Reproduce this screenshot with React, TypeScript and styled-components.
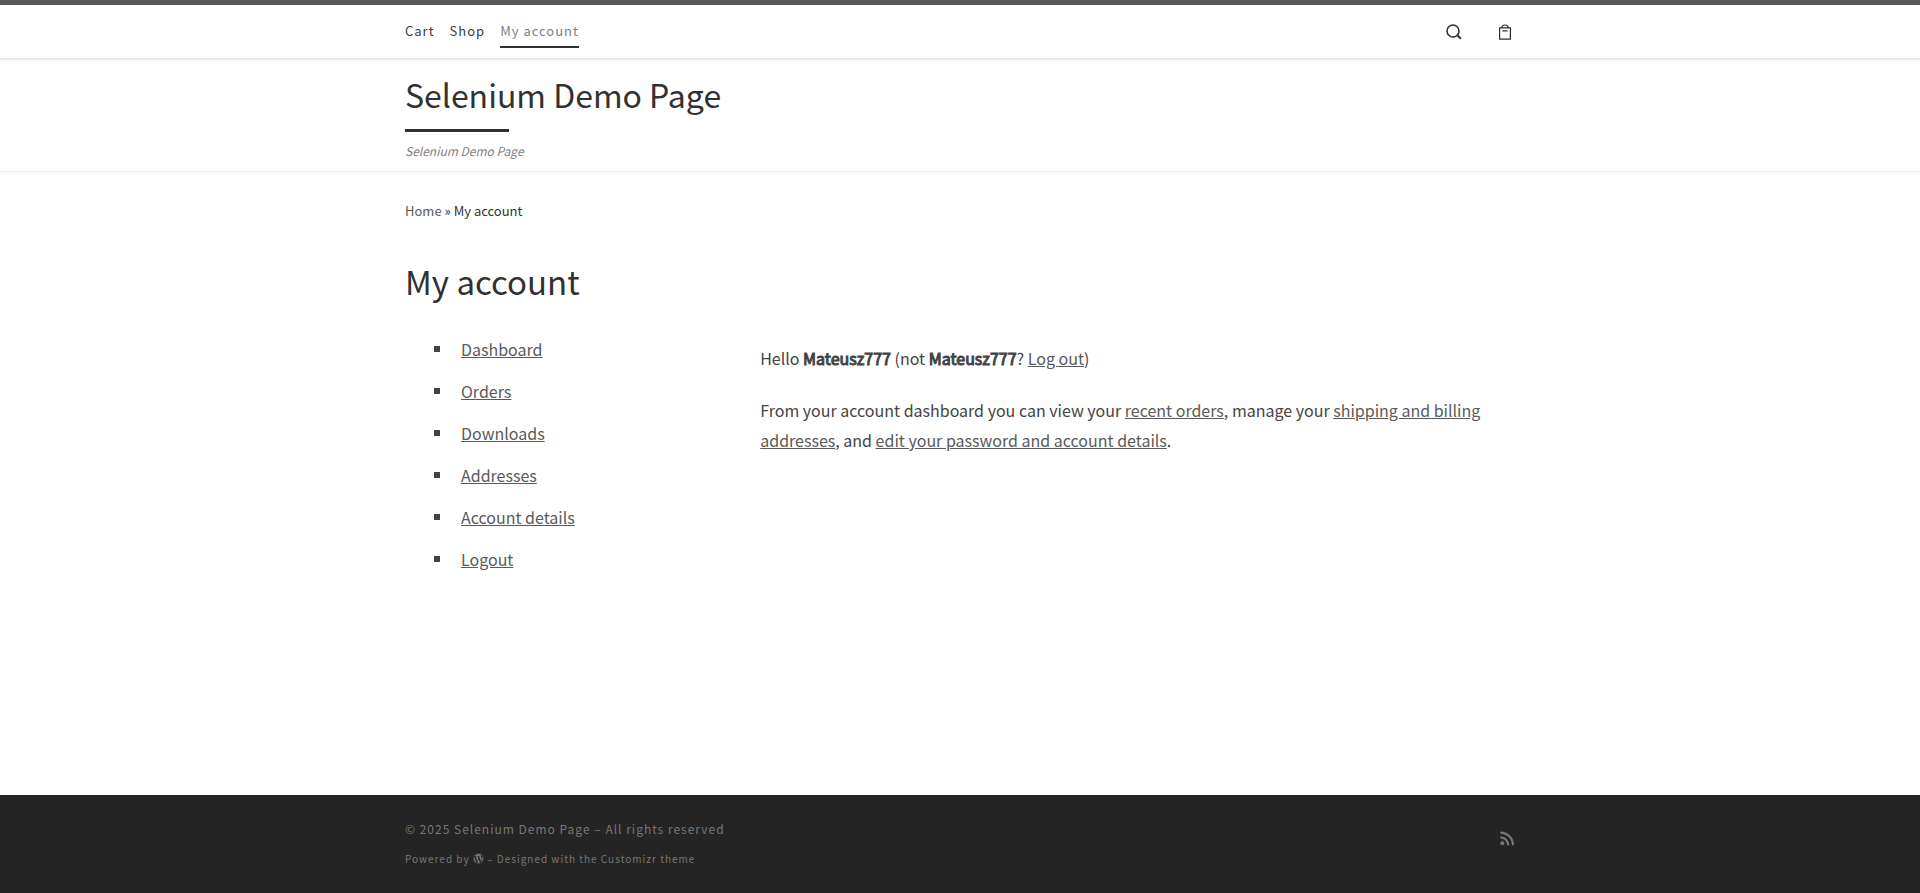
import React from "react";
import styled, { createGlobalStyle } from "styled-components";
import { FaWordpress } from "react-icons/fa";

const GlobalStyle = createGlobalStyle`
  *, *::before, *::after { box-sizing: border-box; }
  body {
    margin: 0;
    background: #fff;
    color: #444;
    font-family: "Source Sans Pro", "Noto Sans CJK SC", "Noto Sans", sans-serif;
    font-size: 16px;
    line-height: 30px;
  }
  a { color: inherit; text-decoration: none; }
`;

const Page = styled.div`
  min-height: 100vh;
  display: flex;
  flex-direction: column;
  border-top: 5px solid #5a5a5a;
`;

const Container = styled.div`
  width: 100%;
  max-width: 1140px;
  margin: 0 auto;
  padding: 0 15px;
`;

const TopBar = styled.header`
  border-bottom: 1px solid #e9e9e9;
  box-shadow: 0 1px 3px rgba(0, 0, 0, 0.1);
`;

const TopBarRow = styled(Container)`
  height: 53px;
  display: flex;
  align-items: center;
  justify-content: space-between;
`;

const Menu = styled.nav`
  display: flex;
  gap: 15px;
`;

const MenuLink = styled.a<{ $current?: boolean }>`
  padding: 6px 0 5px;
  border-bottom: 2px solid ${(p) => (p.$current ? "#313131" : "transparent")};
  color: ${(p) => (p.$current ? "#808080" : "#3b3b3b")};
  font-size: 13px;
  line-height: 20px;
  letter-spacing: 1px;
`;

const Tools = styled.div`
  display: flex;
  gap: 36px;
  padding-right: 3px;
  color: #313131;
`;

const SearchButton = styled.button`
  display: flex;
  padding: 0;
  border: 0;
  background: none;
  color: inherit;
  cursor: pointer;
`;

const CartLink = styled.a`
  display: flex;
`;

const Branding = styled.section`
  border-bottom: 1px solid #ececec;
  box-shadow: 0 1px 3px rgba(0, 0, 0, 0.06);
`;

const BrandingInner = styled(Container)`
  padding-top: 11px;
  padding-bottom: 10px;
`;

const SiteTitle = styled.a`
  display: block;
  width: fit-content;
  color: #313131;
  font-size: 32px;
  line-height: 48px;

  &::after {
    content: "";
    display: block;
    width: 33%;
    height: 3px;
    margin-top: 11px;
    background: #313131;
  }
`;

const Tagline = styled.p`
  margin: 9px 0 0;
  color: #808080;
  font-size: 12px;
  font-style: italic;
  line-height: 20px;
`;

const Main = styled(Container).attrs({ as: "main" })`
  flex: 1;
  padding-bottom: 40px;
`;

const Breadcrumb = styled.nav`
  margin-top: 29px;
  color: #313131;
  font-size: 13px;
  line-height: 20px;

  a { color: #5a5a5a; }
`;

const PageTitle = styled.h1`
  margin: 35px 0 28px;
  color: #313131;
  font-size: 33px;
  font-weight: 400;
  line-height: 50px;
`;

const Account = styled.div`
  display: flex;
  justify-content: space-between;
`;

const AccountNav = styled.nav`
  width: 30%;
`;

const AccountList = styled.ul`
  display: flex;
  flex-direction: column;
  gap: 12px;
  margin: 0;
  padding: 0 0 0 29px;
  list-style: none;
`;

const AccountItem = styled.li`
  display: flex;
  align-items: center;
  gap: 21px;

  &::before {
    content: "";
    width: 6px;
    height: 6px;
    background: #444;
  }
`;

const TextLink = styled.a`
  color: #5a5a5a;
  text-decoration: underline;
`;

const UserName = styled.strong`
  font-weight: 400;
  -webkit-text-stroke: 1px currentColor;
`;

const AccountContent = styled.div`
  width: 68%;
  padding-top: 9px;

  p { margin: 0 0 22px; }
`;

const Footer = styled.footer`
  background: #242424;
  color: #777;
`;

const FooterRow = styled(Container)`
  display: flex;
  align-items: flex-start;
  justify-content: space-between;
  padding-top: 19px;
  padding-bottom: 24px;
`;

const Credits = styled.div`
  display: flex;
  flex-direction: column;
  gap: 5px;
`;

const CreditLine = styled.p<{ $small?: boolean }>`
  margin: 0;
  font-size: ${(p) => (p.$small ? 10 : 12)}px;
  line-height: ${(p) => (p.$small ? 20 : 30)}px;
  letter-spacing: 1px;

  svg { vertical-align: -1px; }
`;

const FeedLink = styled.a`
  display: flex;
  padding-top: 17px;
`;

const SearchIcon = () => (
  <svg width="16" height="16" viewBox="0 0 16 16" fill="none" stroke="currentColor" aria-hidden="true">
    <circle cx="7" cy="7" r="6" strokeWidth="1.6" />
    <path d="M11.2 11.2L15 14.8" strokeWidth="1.9" />
  </svg>
);

const BagIcon = () => (
  <svg width="14" height="16" viewBox="0 0 14 16" fill="none" stroke="currentColor" strokeWidth="1.2" aria-hidden="true">
    <path d="M1.6 3.9h10.8v11.3H1.6zM3.8 3.9C4 0 10 0 10.2 3.9M4.4 6.8h5.2" />
  </svg>
);

const FeedIcon = () => (
  <svg width="15" height="15" viewBox="0 0 15 15" fill="none" stroke="currentColor" strokeWidth="2.2" aria-hidden="true">
    <circle cx="2.3" cy="12.3" r="2" fill="currentColor" stroke="none" />
    <path d="M0.4 6.4a7.8 7.8 0 0 1 7.8 7.8M0.4 1.6a12.6 12.6 0 0 1 12.6 12.6" />
  </svg>
);

const accountLinks = ["Dashboard", "Orders", "Downloads", "Addresses", "Account details", "Logout"];

export default function App() {
  return (
    <Page>
      <GlobalStyle />
      <TopBar>
        <TopBarRow>
          <Menu aria-label="Main menu">
            <MenuLink href="#cart">Cart</MenuLink>
            <MenuLink href="#shop">Shop</MenuLink>
            <MenuLink href="#account" $current aria-current="page">My account</MenuLink>
          </Menu>
          <Tools>
            <SearchButton type="button" aria-label="Search"><SearchIcon /></SearchButton>
            <CartLink href="#cart" aria-label="View your cart"><BagIcon /></CartLink>
          </Tools>
        </TopBarRow>
      </TopBar>
      <Branding>
        <BrandingInner>
          <SiteTitle href="#home">Selenium Demo Page</SiteTitle>
          <Tagline>Selenium Demo Page</Tagline>
        </BrandingInner>
      </Branding>
      <Main>
        <Breadcrumb aria-label="Breadcrumb">
          <a href="#home">Home</a> » My account
        </Breadcrumb>
        <PageTitle>My account</PageTitle>
        <Account>
          <AccountNav aria-label="Account pages">
            <AccountList>
              {accountLinks.map((label) => (
                <AccountItem key={label}>
                  <TextLink href="#account">{label}</TextLink>
                </AccountItem>
              ))}
            </AccountList>
          </AccountNav>
          <AccountContent>
            <p>
              Hello <UserName>Mateusz777</UserName> (not <UserName>Mateusz777</UserName>?{" "}
              <TextLink href="#logout">Log out</TextLink>)
            </p>
            <p>
              From your account dashboard you can view your <TextLink href="#orders">recent orders</TextLink>, manage
              your <TextLink href="#addresses">shipping and billing addresses</TextLink>, and{" "}
              <TextLink href="#details">edit your password and account details</TextLink>.
            </p>
          </AccountContent>
        </Account>
      </Main>
      <Footer>
        <FooterRow>
          <Credits>
            <CreditLine>© 2025 <a href="#home">Selenium Demo Page</a> – All rights reserved</CreditLine>
            <CreditLine $small>
              Powered by <a href="#wordpress" aria-label="WordPress"><FaWordpress size={11} /></a> – Designed with the{" "}
              <a href="#theme">Customizr theme</a>
            </CreditLine>
          </Credits>
          <FeedLink href="#feed" aria-label="RSS feed"><FeedIcon /></FeedLink>
        </FooterRow>
      </Footer>
    </Page>
  );
}
